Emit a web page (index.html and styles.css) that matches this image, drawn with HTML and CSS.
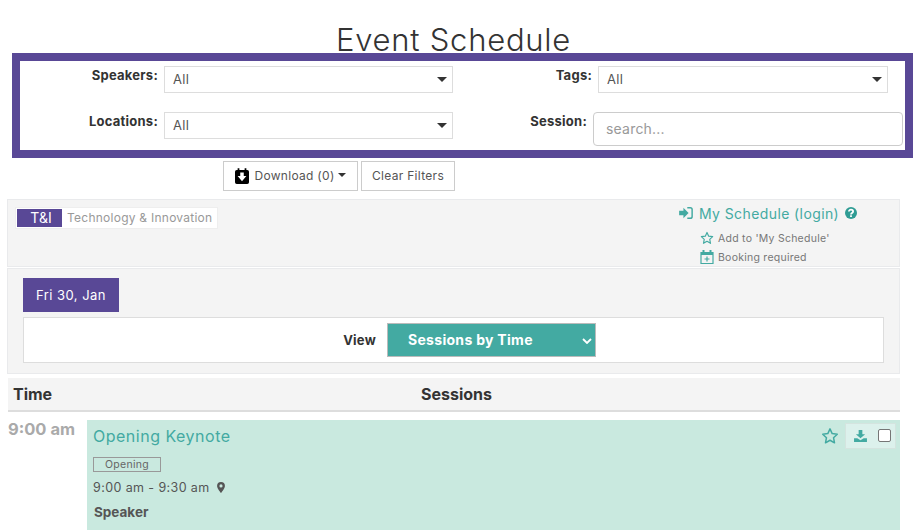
FILE: index.html
```
<!DOCTYPE html>
<html lang="en">
<head>
<meta charset="utf-8">
<title>Event Schedule</title>
<link rel="stylesheet" href="styles.css">
</head>
<body>
<h1 class="page-title">Event Schedule</h1>
<form class="filters">
  <label class="filter-label">Speakers:</label>
  <div class="select-wrap"><select class="filter-select"><option>All</option></select></div>
  <label class="filter-label">Tags:</label>
  <div class="select-wrap wide"><select class="filter-select"><option>All</option></select></div>
  <label class="filter-label">Locations:</label>
  <div class="select-wrap"><select class="filter-select"><option>All</option></select></div>
  <label class="filter-label session-label">Session:</label>
  <input class="search" type="text" placeholder="search...">
</form>
<div class="toolbar">
  <button class="btn btn-download" type="button">
    <svg class="ico-cal" viewBox="0 0 16 18" width="14" height="16"><path fill="#000" d="M3 0h2v2h6V0h2v2h1a2 2 0 0 1 2 2v12a2 2 0 0 1-2 2H2a2 2 0 0 1-2-2V4a2 2 0 0 1 2-2h1z"/><path fill="#fff" d="M6 5h4v4h3l-5 6-5-6h3z"/></svg>
    Download (0)<span class="caret-small"></span>
  </button>
  <button class="btn btn-clear" type="button">Clear Filters</button>
</div>
<section class="panel legend">
  <div class="chip"><span class="chip-code">T&amp;I</span><span class="chip-name">Technology &amp; Innovation</span></div>
  <div class="my-schedule">
    <div class="login-line">
      <svg class="ico-login" viewBox="0 0 16 14" width="14" height="12"><path fill="#43aaa2" d="M0 4.500h5V1l6 6-6 6V9.500H0z"/><path fill="#43aaa2" d="M9.500 0H13a3 3 0 0 1 3 3v8a3 3 0 0 1-3 3H9.500v-1.700H13a1.300 1.300 0 0 0 1.300-1.300V3A1.300 1.300 0 0 0 13 1.700H9.500z"/></svg>
      <span class="login-text">My Schedule (login)</span>
      <svg class="ico-help" viewBox="0 0 12 12" width="12" height="12"><circle cx="6" cy="6" r="6" fill="#2f9c94"/><path fill="none" stroke="#fff" stroke-width="1.800" d="M3.900 4.600C3.900 2 8.100 2.200 8.100 4.500 8.100 6 6 6 6 7.400"/><rect x="5.100" y="8.300" width="1.800" height="1.700" fill="#fff"/></svg>
    </div>
    <div class="legend-line">
      <svg class="ico-legend" viewBox="0 0 24 24" width="14" height="14"><path fill="none" stroke="#43aaa2" stroke-width="2" stroke-linejoin="round" d="M12 2.500l2.900 6.300 6.800.8-5 4.700 1.300 6.800-6-3.400-6 3.400 1.300-6.800-5-4.700 6.800-.8z"/></svg>
      <span>Add to 'My Schedule'</span>
    </div>
    <div class="legend-line">
      <svg class="ico-legend" viewBox="0 0 14 14" width="14" height="14"><path fill="none" stroke="#43aaa2" stroke-width="1.200" d="M1 2.500h12v11H1z"/><path stroke="#43aaa2" stroke-width="2" d="M1 4h12M3.500 0v2.500M10.500 0v2.500"/><path stroke="#43aaa2" stroke-width="1.200" d="M7 6.500v5M4.500 9h5"/></svg>
      <span>Booking required</span>
    </div>
  </div>
</section>
<section class="panel days">
  <button class="day-btn" type="button">Fri 30, Jan</button>
  <div class="view-bar">
    <span class="view-label">View</span>
    <div class="view-select">Sessions by Time
      <svg class="ico-chev" viewBox="0 0 10 6" width="10" height="6"><path fill="none" stroke="#fff" stroke-width="1.800" d="M1 1l4 4 4-4"/></svg>
    </div>
  </div>
</section>
<div class="table-head">
  <span class="head-time">Time</span>
  <span class="head-sessions">Sessions</span>
</div>
<div class="slot">
  <div class="slot-time">9:00 am</div>
  <article class="session">
    <div class="session-top">
      <h2 class="session-title">Opening Keynote</h2>
      <svg class="ico-star" viewBox="0 0 24 24" width="18" height="18"><path fill="none" stroke="#43aaa2" stroke-width="2" stroke-linejoin="round" d="M12 2.500l2.900 6.300 6.800.8-5 4.700 1.300 6.800-6-3.400-6 3.400 1.300-6.800-5-4.700 6.800-.8z"/></svg>
      <div class="session-actions">
        <svg viewBox="0 0 14 13" width="13" height="12"><path fill="#43aaa2" d="M5 0h4v4.500h3L7 9 2 4.500h3zM0 9h3.500L7 11l3.500-2H14v4H0z"/></svg>
        <input class="pick" type="checkbox">
      </div>
    </div>
    <span class="badge">Opening</span>
    <div class="session-when">9:00 am - 9:30 am
      <svg class="ico-pin" viewBox="0 0 10 14" width="8" height="11"><path fill="#555" fill-rule="evenodd" d="M5 0a5 5 0 0 1 5 5c0 2.500-3.500 7-5 9-1.500-2-5-6.500-5-9a5 5 0 0 1 5-5zm0 3a2 2 0 1 0 0 4 2 2 0 0 0 0-4z"/></svg>
    </div>
    <div class="session-speaker">Speaker</div>
  </article>
</div>
</body>
</html>
```
FILE: styles.css
```
* { box-sizing: border-box; }
html, body { margin: 0; height: 530px; overflow: hidden; }
body { font-family: "Inter", "Open Sans", sans-serif; color: #333; background: #fff; width: 913px; }

.page-title { margin: 0; height: 53px; padding: 22px 6px 0 0; font-size: 31px; line-height: 36px; font-weight: 300; text-align: center; letter-spacing: .75px; color: #333; white-space: nowrap; overflow: visible; }

.filters { margin-left: 12px; height: 105px; border: 8px solid #594896; padding-top: 5px; display: grid; grid-template-columns: 144px 289px 145px 1fr; grid-auto-rows: 46px; }
.filter-label { text-align: right; padding: 1px 6px 0 0; font-size: 13px; line-height: 16px; font-weight: 700; letter-spacing: .25px; color: #333; }
.session-label { padding-right: 11px; }
.select-wrap { position: relative; width: 289px; height: 27px; }
.select-wrap.wide { width: 290px; }
.select-wrap::after { content: ""; position: absolute; right: 6px; top: 11px; border-left: 5px solid transparent; border-right: 5px solid transparent; border-top: 5px solid #333; }
.filter-select { appearance: none; width: 100%; height: 27px; border: 1px solid #ddd; border-radius: 0; background: #fff; padding: 0 8px 2px; font: 13px "Inter", sans-serif; letter-spacing: .3px; color: #555; }
.search { width: 310px; height: 34px; margin-left: -5px; border: 1px solid #ccc; border-radius: 4px; padding: 0 12px 2px; font: 14px "Inter", sans-serif; letter-spacing: .2px; color: #555; background: #fff; }
.search::placeholder { color: #999; opacity: 1; }

.toolbar { display: flex; gap: 3px; margin: 3px 0 8px 223px; height: 30px; }
.btn { display: flex; align-items: center; justify-content: center; gap: 5px; height: 30px; padding: 0 0 2px; border: 1px solid #ccc; background: #fff; font: 12px "Inter", sans-serif; letter-spacing: .3px; color: #555; white-space: nowrap; }
.btn-download { width: 135px; }
.btn-clear { width: 94px; }
.ico-cal { margin-top: 2px; }
.caret-small { margin-left: -2px; border-left: 4px solid transparent; border-right: 4px solid transparent; border-top: 4px solid #333; }

.panel { margin: 0 13px 1px 7px; background: #f4f4f4; border: 1px solid #e9eaec; }
.legend { height: 68px; padding: 7px 8px 7px 7px; display: flex; justify-content: space-between; }
.chip { display: flex; align-items: center; height: 22px; padding: 0 5px 0 1px; background: #fff; border: 1px solid #eee; }
.chip-code { width: 45px; height: 18px; padding: 0 0 0 3px; background: #594896; color: #fff; font-size: 14px; line-height: 17px; text-align: center; }
.chip-name { margin-left: 5px; padding-bottom: 2px; font-size: 12px; letter-spacing: .25px; color: #999; }
.my-schedule { width: 212px; padding-top: 0; }
.login-line { display: flex; align-items: center; gap: 6px; height: 16px; margin-top: -2px; }
.login-text { font-size: 14px; letter-spacing: .4px; color: #43aaa2; }
.legend-line { display: flex; align-items: center; gap: 4px; margin: 10px 0 0 21px; height: 14px; font-size: 10.500px; letter-spacing: .25px; color: #777; }
.legend-line + .legend-line { margin-top: 5px; }

.days { height: 106px; padding: 9px 15px; margin-bottom: 4px; }
.day-btn { display: block; width: 96px; height: 34px; border: 0; background: #594896; color: #fff; font: 13px "Inter", sans-serif; letter-spacing: .45px; }
.view-bar { display: flex; align-items: center; justify-content: flex-end; gap: 11px; height: 46px; margin-top: 5px; padding-right: 287px; background: #fff; border: 1px solid #ddd; }
.view-label { font-size: 13px; font-weight: 700; letter-spacing: .25px; }
.view-select { position: relative; display: flex; align-items: center; width: 209px; height: 34px; padding: 0 0 2px 20px; background: #43aaa2; border: 1px solid #bbb; color: #fff; font-size: 14px; font-weight: 700; letter-spacing: .3px; }
.ico-chev { position: absolute; right: 3px; top: 14px; }

.table-head { position: relative; display: flex; margin: 0 13px 0 8px; height: 34px; background: #f4f4f4; border-bottom: 2px solid #ddd; align-items: center; font-size: 16px; font-weight: 700; }
.head-time { width: 413px; padding-left: 5px; }
.slot { display: flex; margin: 8px 13px 0 8px; }
.slot-time { width: 79px; font-size: 16.500px; line-height: 18px; font-weight: 700; color: #aaa; white-space: nowrap; }
.session { flex: 1; height: 110px; padding: 3px 4px 0 6px; background: #c9e9df; }
.session-top { display: flex; align-items: flex-start; height: 34px; }
.session-title { flex: 1; margin: 2px 0 0; font-size: 16px; line-height: 22px; font-weight: 400; letter-spacing: .5px; color: #43aaa2; }
.ico-star { margin: 4px 6px 0 0; }
.session-actions { display: flex; align-items: center; justify-content: space-between; width: 51px; height: 26px; padding: 0 4px 0 8px; background: #dcf1ec; border: 1px solid #d4e4df; }
.pick { appearance: none; width: 13px; height: 13px; margin: 0 0 2px; background: #fff; border: 1px solid #767676; border-radius: 2px; }
.badge { display: block; width: 68px; height: 15px; border: 1px solid #999; font-size: 10.500px; line-height: 13px; letter-spacing: .3px; color: #666; text-align: center; }
.session-when { display: flex; align-items: center; gap: 7px; margin-top: 7px; height: 16px; font-size: 12.500px; letter-spacing: .4px; color: #555; }
.session-speaker { margin: 9px 0 0 1px; font-size: 13.500px; line-height: 16px; font-weight: 700; color: #555; }
```
